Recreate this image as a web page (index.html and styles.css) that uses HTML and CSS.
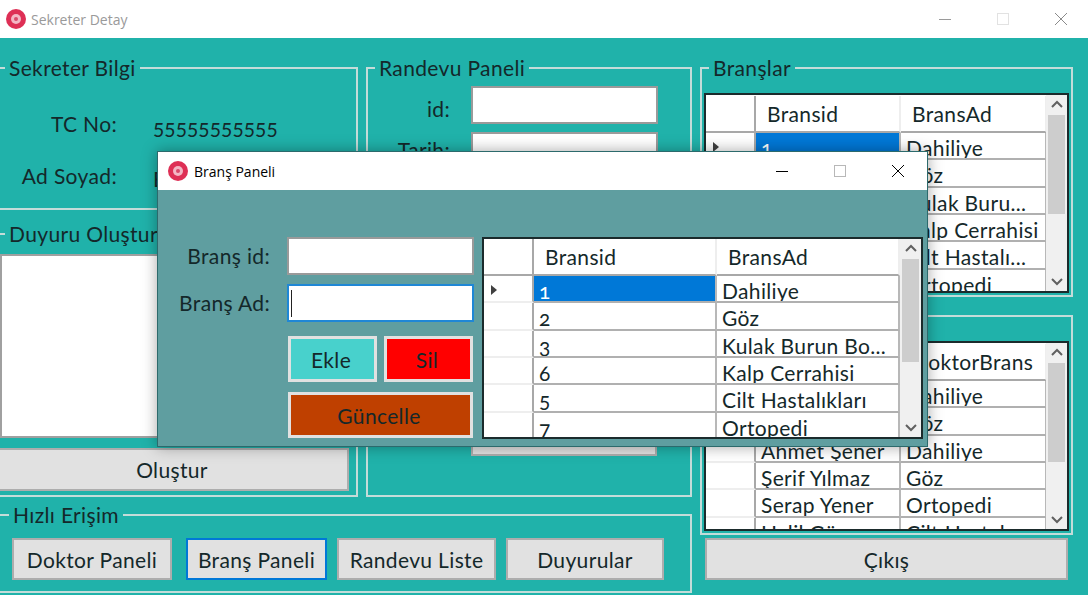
FILE: index.html
```html
<!DOCTYPE html>
<html lang="tr">
<head>
  <meta charset="UTF-8" />
  <title>Sekreter Detay</title>
  <link rel="stylesheet" href="styles.css">
</head>
<body>
  <div class="window">
    <!-- Ana pencere basligi -->
    <div class="titlebar">
      <svg class="app-icon" viewBox="0 0 20 20"><circle cx="10" cy="10" r="10" fill="#de2f55"/><circle cx="10" cy="10" r="5" fill="#f3b6c4"/><circle cx="10" cy="10" r="2" fill="#d9486a"/></svg>
      <span class="title-text">Sekreter Detay</span>
      <div class="controls controls-off">
        <svg viewBox="0 0 12 12"><path d="M0 6.5H12" stroke="#9a9a9a"/></svg>
        <svg viewBox="0 0 12 12"><rect x=".5" y=".5" width="11" height="11" fill="none" stroke="#e2e2e2"/></svg>
        <svg viewBox="0 0 12 12"><path d="M0 0L12 12M12 0L0 12" stroke="#8a8a8a"/></svg>
      </div>
    </div>

    <div class="main">
      <div class="col col-left">
        <fieldset class="group group-info">
          <legend>Sekreter Bilgi</legend>
          <div class="info">
            <span class="info-label">TC No:</span><span class="info-value">55555555555</span>
            <span class="info-label">Ad Soyad:</span><span class="info-value">B</span>
          </div>
        </fieldset>
        <fieldset class="group group-notice">
          <legend>Duyuru Oluştur</legend>
          <textarea class="notice-text"></textarea>
          <button class="btn btn-create">Oluştur</button>
        </fieldset>
      </div>

      <fieldset class="group group-appt">
        <legend>Randevu Paneli</legend>
        <div class="appt-form">
          <label class="appt-label">id:</label><input class="field" type="text" />
          <label class="appt-label appt-label-date">Tarih:</label><input class="field" type="text" />
        </div>
        <button class="btn btn-appt"></button>
      </fieldset>

      <div class="col col-right">
        <fieldset class="group group-branch">
          <legend>Branşlar</legend>
          <div class="grid grid-small grid-branch">
            <div class="grid-body">
              <div class="row head"><span class="rh"></span><span class="c">Bransid</span><span class="c">BransAd</span></div>
              <div class="row"><span class="rh"><i class="arrow"></i></span><span class="c sel">1</span><span class="c">Dahiliye</span></div>
              <div class="row"><span class="rh"></span><span class="c">2</span><span class="c">Göz</span></div>
              <div class="row"><span class="rh"></span><span class="c">3</span><span class="c">Kulak Buru...</span></div>
              <div class="row"><span class="rh"></span><span class="c">6</span><span class="c">Kalp Cerrahisi</span></div>
              <div class="row"><span class="rh"></span><span class="c">5</span><span class="c">Cilt Hastalı...</span></div>
              <div class="row"><span class="rh"></span><span class="c">7</span><span class="c">Ortopedi</span></div>
            </div>
            <div class="scroll">
              <svg class="chev" viewBox="0 0 20 20"><path d="M5 12L10 7L15 12" fill="none" stroke="#606060" stroke-width="2"/></svg>
              <div class="thumb"></div>
              <svg class="chev chev-down" viewBox="0 0 20 20"><path d="M5 8L10 13L15 8" fill="none" stroke="#606060" stroke-width="2"/></svg>
            </div>
          </div>
        </fieldset>
        <fieldset class="group group-doctor">
          <legend>Doktorlar</legend>
          <div class="grid grid-small grid-doctor">
            <div class="grid-body">
              <div class="row head"><span class="rh"></span><span class="c"></span><span class="c">DoktorBrans</span></div>
              <div class="row"><span class="rh"></span><span class="c"></span><span class="c">Dahiliye</span></div>
              <div class="row"><span class="rh"></span><span class="c"></span><span class="c">Göz</span></div>
              <div class="row"><span class="rh"></span><span class="c">Ahmet Şener</span><span class="c">Dahiliye</span></div>
              <div class="row"><span class="rh"></span><span class="c">Şerif Yılmaz</span><span class="c">Göz</span></div>
              <div class="row"><span class="rh"></span><span class="c">Serap Yener</span><span class="c">Ortopedi</span></div>
              <div class="row"><span class="rh"></span><span class="c">Halil Gü</span><span class="c">Cilt Hastal</span></div>
            </div>
            <div class="scroll">
              <svg class="chev" viewBox="0 0 20 20"><path d="M5 12L10 7L15 12" fill="none" stroke="#606060" stroke-width="2"/></svg>
              <div class="thumb"></div>
              <svg class="chev chev-down" viewBox="0 0 20 20"><path d="M5 8L10 13L15 8" fill="none" stroke="#606060" stroke-width="2"/></svg>
            </div>
          </div>
        </fieldset>
        <button class="btn btn-exit">Çıkış</button>
      </div>

      <fieldset class="group group-quick">
        <legend>Hızlı Erişim</legend>
        <div class="quick">
          <button class="btn q-doctor">Doktor Paneli</button>
          <button class="btn btn-focus q-branch">Branş Paneli</button>
          <button class="btn q-appt">Randevu Liste</button>
          <button class="btn q-notice">Duyurular</button>
        </div>
      </fieldset>
    </div>

    <!-- Brans paneli penceresi -->
    <div class="dialog">
      <div class="titlebar dialog-bar">
        <svg class="app-icon" viewBox="0 0 20 20"><circle cx="10" cy="10" r="10" fill="#de2f55"/><circle cx="10" cy="10" r="5" fill="#f3b6c4"/><circle cx="10" cy="10" r="2" fill="#d9486a"/></svg>
        <span class="title-text">Branş Paneli</span>
        <div class="controls">
          <svg viewBox="0 0 12 12"><path d="M0 6.5H12" stroke="#000"/></svg>
          <svg viewBox="0 0 12 12"><rect x=".5" y=".5" width="11" height="11" fill="none" stroke="#b8b8b8"/></svg>
          <svg viewBox="0 0 12 12"><path d="M0 0L12 12M12 0L0 12" stroke="#000"/></svg>
        </div>
      </div>
      <div class="dialog-body">
        <div class="dialog-form">
          <label class="dialog-label">Branş id:</label><input class="field" type="text" />
          <label class="dialog-label">Branş Ad:</label><div class="field field-focus"></div>
          <div class="dialog-actions">
            <button class="btn btn-color btn-add">Ekle</button>
            <button class="btn btn-color btn-del">Sil</button>
            <button class="btn btn-color btn-update">Güncelle</button>
          </div>
        </div>
        <div class="grid grid-dialog">
          <div class="grid-body">
            <div class="row head"><span class="rh"></span><span class="c">Bransid</span><span class="c">BransAd</span></div>
            <div class="row"><span class="rh"><i class="arrow"></i></span><span class="c sel">1</span><span class="c">Dahiliye</span></div>
            <div class="row"><span class="rh"></span><span class="c">2</span><span class="c">Göz</span></div>
            <div class="row"><span class="rh"></span><span class="c">3</span><span class="c">Kulak Burun Bo...</span></div>
            <div class="row"><span class="rh"></span><span class="c">6</span><span class="c">Kalp Cerrahisi</span></div>
            <div class="row"><span class="rh"></span><span class="c">5</span><span class="c">Cilt Hastalıkları</span></div>
            <div class="row"><span class="rh"></span><span class="c">7</span><span class="c">Ortopedi</span></div>
          </div>
          <div class="scroll">
            <svg class="chev" viewBox="0 0 20 20"><path d="M5 12L10 7L15 12" fill="none" stroke="#606060" stroke-width="2"/></svg>
            <div class="thumb"></div>
            <svg class="chev chev-down" viewBox="0 0 20 20"><path d="M5 8L10 13L15 8" fill="none" stroke="#606060" stroke-width="2"/></svg>
          </div>
        </div>
      </div>
    </div>
  </div>
</body>
</html>
```

FILE: styles.css
```css
* {
  box-sizing: border-box;
}
body {
  margin: 0;
  font-family: 'Lato', sans-serif;
  font-size: 21px;
  letter-spacing: 0.35px;
  color: #14282a;
  overflow: hidden;
}
button, input, textarea {
  font: inherit;
  color: inherit;
  letter-spacing: inherit;
}
.window {
  position: relative;
  width: 1088px;
  height: 595px;
  overflow: hidden;
  background: #20b2aa;
}

/* title bars */
.titlebar {
  display: flex;
  align-items: center;
  height: 38px;
  padding-left: 6px;
  background: white;
}
.app-icon {
  width: 20px;
  height: 20px;
}
.title-text {
  margin-left: 5px;
  font-family: 'Open Sans', sans-serif;
  font-size: 14px;
  letter-spacing: 0;
  color: #9a9a9a;
}
.controls {
  display: flex;
  gap: 46px;
  margin-left: auto;
  margin-right: 21px;
}
.controls svg {
  display: block;
  width: 12px;
  height: 12px;
}

/* main layout */
.main {
  display: grid;
  grid-template-columns: 363px 326px 373px;
  grid-template-rows: 440px 89px;
  column-gap: 8px;
  row-gap: 7px;
  margin-left: -5px;
  padding-top: 19px;
}
.col {
  display: flex;
  flex-direction: column;
}
.col-left {
  grid-column: 1;
  grid-row: 1;
}
.col-right {
  grid-column: 3;
  grid-row: 1 / 3;
}
.group {
  margin: 0;
  padding: 0;
  min-width: 0;
  border: 2px solid #c4dcd9;
}
.group legend {
  margin-left: 8px;
  padding: 0 4px;
  height: 22px;
  line-height: 22px;
}
.group-info {
  height: 153px;
}
.group-notice {
  height: 274px;
  margin-top: 13px;
}
.group-appt {
  position: relative;
  grid-column: 2;
  grid-row: 1;
}
.group-appt legend, .group-branch legend {
  margin-left: 7px;
}
.group-quick {
  grid-column: 1 / 3;
  grid-row: 2;
}
.group-quick legend {
  margin-left: 12px;
}
.group-branch {
  height: 240px;
}
.group-doctor {
  height: 230px;
  margin-top: 8px;
}

/* sekreter bilgi */
.info {
  display: grid;
  grid-template-columns: 120px auto;
  column-gap: 36px;
  row-gap: 28px;
  margin-top: 33px;
  line-height: 24px;
}
.info-label {
  text-align: right;
}
.info-value {
  position: relative;
  top: 3px;
  letter-spacing: 0;
  font-feature-settings: "onum";
}

/* duyuru */
.notice-text {
  display: block;
  width: 350px;
  height: 184px;
  margin: 9px 0 0 3px;
  border: 2px solid #a0a0a0;
  background: white;
  resize: none;
}
.btn {
  display: block;
  padding: 0;
  background: #e1e1e1;
  border: 2px solid #adadad;
}
.btn-create {
  width: 354px;
  height: 43px;
  margin: 10px 0 0 -2px;
}

/* randevu */
.appt-form {
  display: grid;
  grid-template-columns: 82px 187px;
  column-gap: 21px;
  margin: 7px 0 0 0;
}
.appt-label {
  text-align: right;
  line-height: 46px;
}
.appt-label-date {
  margin-top: -5px;
}
.field {
  display: block;
  height: 38px;
  border: 2px solid #9a9a9a;
  background: white;
}
.btn-appt {
  position: absolute;
  right: 33px;
  bottom: 39px;
  width: 186px;
  height: 46px;
}

/* data grid */
.grid {
  display: flex;
  border: 2px solid #1b2b2c;
  background: white;
  overflow: hidden;
}
.grid-body {
  flex: 1;
  overflow: hidden;
}
.row {
  display: grid;
  grid-template-columns: 50px 145px 146px;
  height: 27.33px;
}
.grid-dialog .row {
  grid-template-columns: 50px 183px 183px;
}
.row.head {
  height: 37px;
}
.rh {
  display: flex;
  align-items: center;
  padding: 2px 0 0 7px;
  border-bottom: 2px solid #eeeeee;
  border-right: 2px solid #a8a8a8;
}
.c {
  padding: 1px 5px 0;
  overflow: hidden;
  white-space: nowrap;
  line-height: 27px;
  border-bottom: 2px solid #b0b0b0;
  border-right: 2px solid #b8b8b8;
  font-feature-settings: "onum";
}
.head .rh {
  border-bottom-color: #a8a8a8;
}
.head .c {
  padding: 3px 11px 0;
  line-height: 30px;
  border-right-color: #eeeeee;
  border-bottom-color: #a8a8a8;
}
.sel {
  background: #0078d7;
  color: white;
}
.arrow {
  width: 0;
  height: 0;
  border-top: 5px solid transparent;
  border-bottom: 5px solid transparent;
  border-left: 6px solid #404040;
}
.scroll {
  display: flex;
  flex-direction: column;
  align-items: center;
  width: 21px;
  background: #f0f0f0;
}
.chev {
  flex: none;
  width: 20px;
  height: 20px;
}
.chev-down {
  margin-top: auto;
}
.thumb {
  width: 17px;
  height: 99px;
  background: #cdcdcd;
}
.grid-small {
  width: 365px;
  margin-left: 2px;
  margin-top: 14px;
}
.grid-small .grid-body {
  padding-top: 1px;
}
.grid-branch {
  height: 200px;
}
.grid-doctor {
  height: 190px;
}
.btn-exit {
  width: 363px;
  height: 42px;
  margin: 3px 0 0 5px;
}

/* hizli erisim */
.quick {
  display: flex;
  gap: 10px;
  margin: 12px 0 0 15px;
}
.quick .btn {
  height: 42px;
}
.q-doctor {
  width: 160px;
  margin-right: 4px;
}
.q-branch {
  width: 141px;
}
.q-appt {
  width: 159px;
}
.q-notice {
  width: 158px;
}
.btn-focus {
  border-color: #0078d7;
}

/* brans paneli */
.dialog {
  position: absolute;
  left: 157px;
  top: 151px;
  width: 771px;
  height: 296px;
  border: 1px solid #2c6a6c;
  background: #5f9ea0;
  box-shadow: 0 0 14px rgba(0, 0, 0, 0.35);
}
.dialog-bar {
  padding-left: 10px;
}
.dialog-bar .title-text {
  margin-left: 6px;
  color: #000;
}
.dialog-bar .controls {
  margin-right: 23px;
}
.dialog-body {
  display: flex;
  padding-top: 47px;
}
.dialog-form {
  display: grid;
  grid-template-columns: 112px 187px;
  grid-template-rows: 37px 38px;
  column-gap: 17px;
  row-gap: 10px;
  width: 324px;
  align-content: start;
}
.dialog-label {
  text-align: right;
  line-height: 37px;
}
.field-focus {
  display: flex;
  align-items: center;
  padding-left: 2px;
  border-color: #1f87d6;
}
.field-focus::before {
  content: "";
  width: 1px;
  height: 27px;
  background: #222;
}
.dialog-actions {
  grid-column: 2;
  display: grid;
  grid-template-columns: 89px 89px;
  grid-template-rows: 46px 46px;
  column-gap: 7px;
  row-gap: 10px;
  margin: 4px 0 0 1px;
}
.btn-color {
  border: 3px solid #e1e1e1;
  padding-right: 3px;
}
.btn-add {
  background: #48d1cc;
}
.btn-del {
  background: #ff0000;
}
.btn-update {
  grid-column: 1 / 3;
  background: #bf4000;
}
.grid-dialog {
  width: 441px;
  height: 202px;
}
.grid-dialog .thumb {
  height: 103px;
}
```
